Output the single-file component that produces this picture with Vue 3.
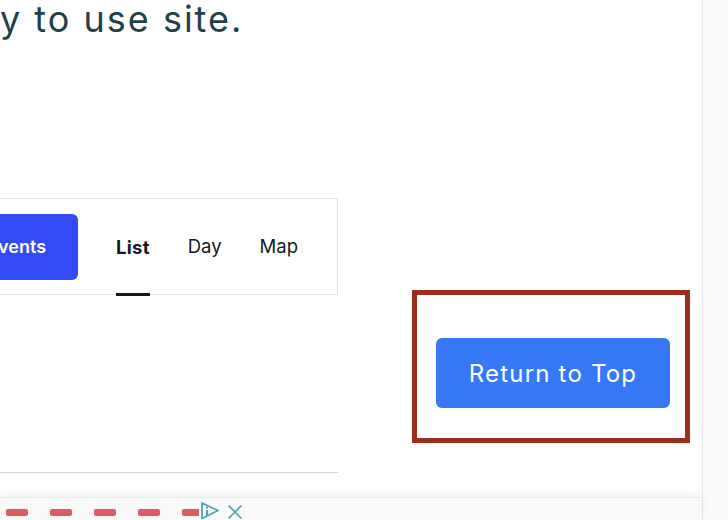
<script setup>
const tabs = [
  { label: 'List', active: true },
  { label: 'Day', active: false },
  { label: 'Map', active: false },
]
const dashes = [1, 2, 3, 4, 5]
</script>

<template>
  <div class="page">
    <div class="main">
      <h1 class="headline">y to use site.</h1>
      <div class="columns">
        <div class="left">
          <div class="toolbar">
            <button class="find-btn">Find Events</button>
            <nav class="tabs">
              <a
                v-for="tab in tabs"
                :key="tab.label"
                class="tab"
                :class="{ active: tab.active }"
              >{{ tab.label }}</a>
            </nav>
          </div>
          <div class="rule"></div>
        </div>
        <div class="right">
          <div class="return-box">
            <button class="return-btn">Return to Top</button>
          </div>
        </div>
      </div>
      <div class="ad-bar">
        <div class="dashes">
          <span v-for="d in dashes" :key="d" class="dash"></span>
        </div>
        <svg class="ad-icon" width="20" height="18" viewBox="0 0 20 18" fill="none" stroke="#4fa3b8" stroke-width="1.8">
          <path d="M2 1 L18 8.5 L2 16.5 Z" stroke-linejoin="round" />
          <path d="M7 8 V14 M7 4.5 V6.5" stroke-width="2" />
        </svg>
        <svg class="ad-close" width="16" height="16" viewBox="0 0 16 16" fill="none" stroke="#4fa3b8" stroke-width="1.7">
          <path d="M1.5 1.5 L14.5 14.5 M14.5 1.5 L1.5 14.5" />
        </svg>
      </div>
    </div>
    <div class="scrollbar"></div>
  </div>
</template>

<style>
html, body {
  margin: 0;
  background: #fff;
}
</style>

<style scoped>
.page {
  display: flex;
  width: 728px;
  height: 520px;
  overflow: hidden;
  background: #fff;
  font-family: Inter, "Open Sans", sans-serif;
}

.main {
  width: 702px;
  height: 520px;
  display: flex;
  flex-direction: column;
}

.scrollbar {
  width: 25px;
  height: 520px;
  border-left: 1px solid #e8e8e8;
  background: #fafafa;
}

.headline {
  margin: 0;
  height: 198px;
  font-size: 36px;
  line-height: 38px;
  font-weight: 400;
  letter-spacing: 2px;
  color: #1f4149;
  white-space: nowrap;
}

.columns {
  display: flex;
  height: 300px;
}

.left {
  width: 338px;
  flex: none;
}

.toolbar {
  height: 97px;
  box-sizing: border-box;
  border: 1px solid #e4e4e4;
  border-left: none;
  display: flex;
  justify-content: flex-end;
  padding: 15px 39px 0 0;
}

.find-btn {
  height: 66px;
  width: 150px;
  flex: none;
  margin-right: 38px;
  border: none;
  border-radius: 6px;
  background: #334af5;
  color: #fff;
  font-family: inherit;
  font-size: 18px;
  font-weight: 600;
  text-align: right;
  padding: 0 32px 0 0;
  white-space: nowrap;
}

.tabs {
  display: flex;
  gap: 38px;
}

.tab {
  height: 82px;
  box-sizing: border-box;
  padding-top: 20px;
  font-size: 18.5px;
  line-height: 24px;
  color: #141827;
  white-space: nowrap;
}

.tab.active {
  font-weight: 700;
  letter-spacing: 0.25px;
  padding-top: 21px;
  border-bottom: 3px solid #141827;
}

.rule {
  margin-top: 177px;
  height: 1px;
  background: #d4d4d4;
}

.right {
  flex: 1;
  padding: 92px 0 0 74px;
}

.return-box {
  width: 278px;
  height: 153px;
  box-sizing: border-box;
  border: 5px solid #9b2f1c;
  padding: 43px 0 0 19px;
}

.return-btn {
  width: 234px;
  height: 70px;
  border: none;
  border-radius: 6px;
  background: #3678f5;
  color: #fff;
  font-family: inherit;
  font-size: 24px;
  font-weight: 400;
  letter-spacing: 1.2px;
  padding: 2px 0 0;
}

.ad-bar {
  height: 22px;
  display: flex;
  align-items: flex-start;
  background: #f9f9f9;
  border-top: 1px solid #ececec;
  box-shadow: 0 -4px 8px rgba(0, 0, 0, 0.05);
  position: relative;
  padding-left: 6px;
}

.dashes {
  display: flex;
  gap: 22px;
  width: 193px;
  overflow: hidden;
  padding-top: 11px;
  flex: none;
}

.dash {
  width: 22px;
  height: 7px;
  flex: none;
  border-radius: 2px;
  background: #e05a63;
}

.ad-icon {
  margin: 4px 0 0 1px;
  flex: none;
}

.ad-close {
  margin: 6px 0 0 7px;
  flex: none;
}
</style>
